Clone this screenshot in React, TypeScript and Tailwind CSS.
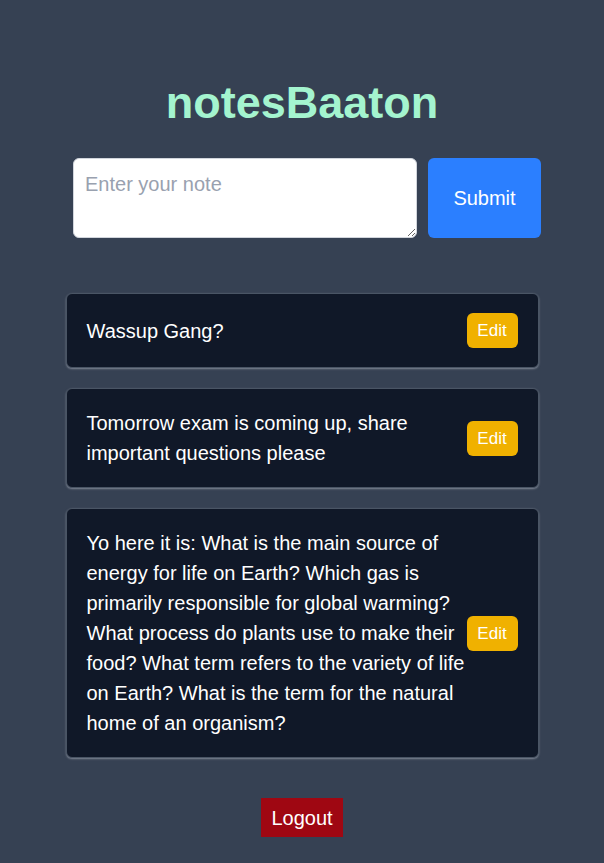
import React, { useState } from 'react';

const notes = [
  'Wassup Gang?',
  'Tomorrow exam is coming up, share important questions please',
  'Yo here it is: What is the main source of energy for life on Earth? Which gas is primarily responsible for global warming? What process do plants use to make their food? What term refers to the variety of life on Earth? What is the term for the natural home of an organism?',
];

export default function App() {
  const [note, setNote] = useState('');

  return (
    <div className="min-h-screen bg-gray-700 flex flex-col items-center pt-[79px] pb-10 font-['Liberation_Sans',Arial,sans-serif]">
      <h1 className="text-[45px] leading-[48px] font-bold text-emerald-200">notesBaaton</h1>

      {/* note input */}
      <div className="flex gap-[11px] w-[468px] ml-[10px] mt-[31px]">
        <textarea
          value={note}
          onChange={(e) => setNote(e.target.value)}
          placeholder="Enter your note"
          className="flex-1 h-20 bg-white rounded-md border border-gray-300 px-[11px] py-[11px] text-xl leading-7 text-gray-900 placeholder:text-gray-400 outline-none"
        />
        <button className="w-[113px] h-20 bg-blue-500 text-white text-xl rounded-md">Submit</button>
      </div>

      {/* notes list */}
      <div className="w-[473px] mt-[55px] flex flex-col gap-5">
        {notes.map((text, i) => (
          <div
            key={i}
            className="bg-gray-900 border border-gray-600 rounded-md shadow-[0_1px_2px_rgba(156,163,175,0.7)] px-5 py-[19px] flex items-center justify-between"
          >
            <p className="text-white text-xl leading-[30px] flex-1">{text}</p>
            <button className="bg-yellow-500 text-white text-[17px] leading-[25px] w-[51px] py-[5px] rounded-md shrink-0">
              Edit
            </button>
          </div>
        ))}
      </div>

      <button className="mt-10 bg-red-800 text-white text-xl leading-7 px-2.5 py-[5.5px]">Logout</button>
    </div>
  );
}
